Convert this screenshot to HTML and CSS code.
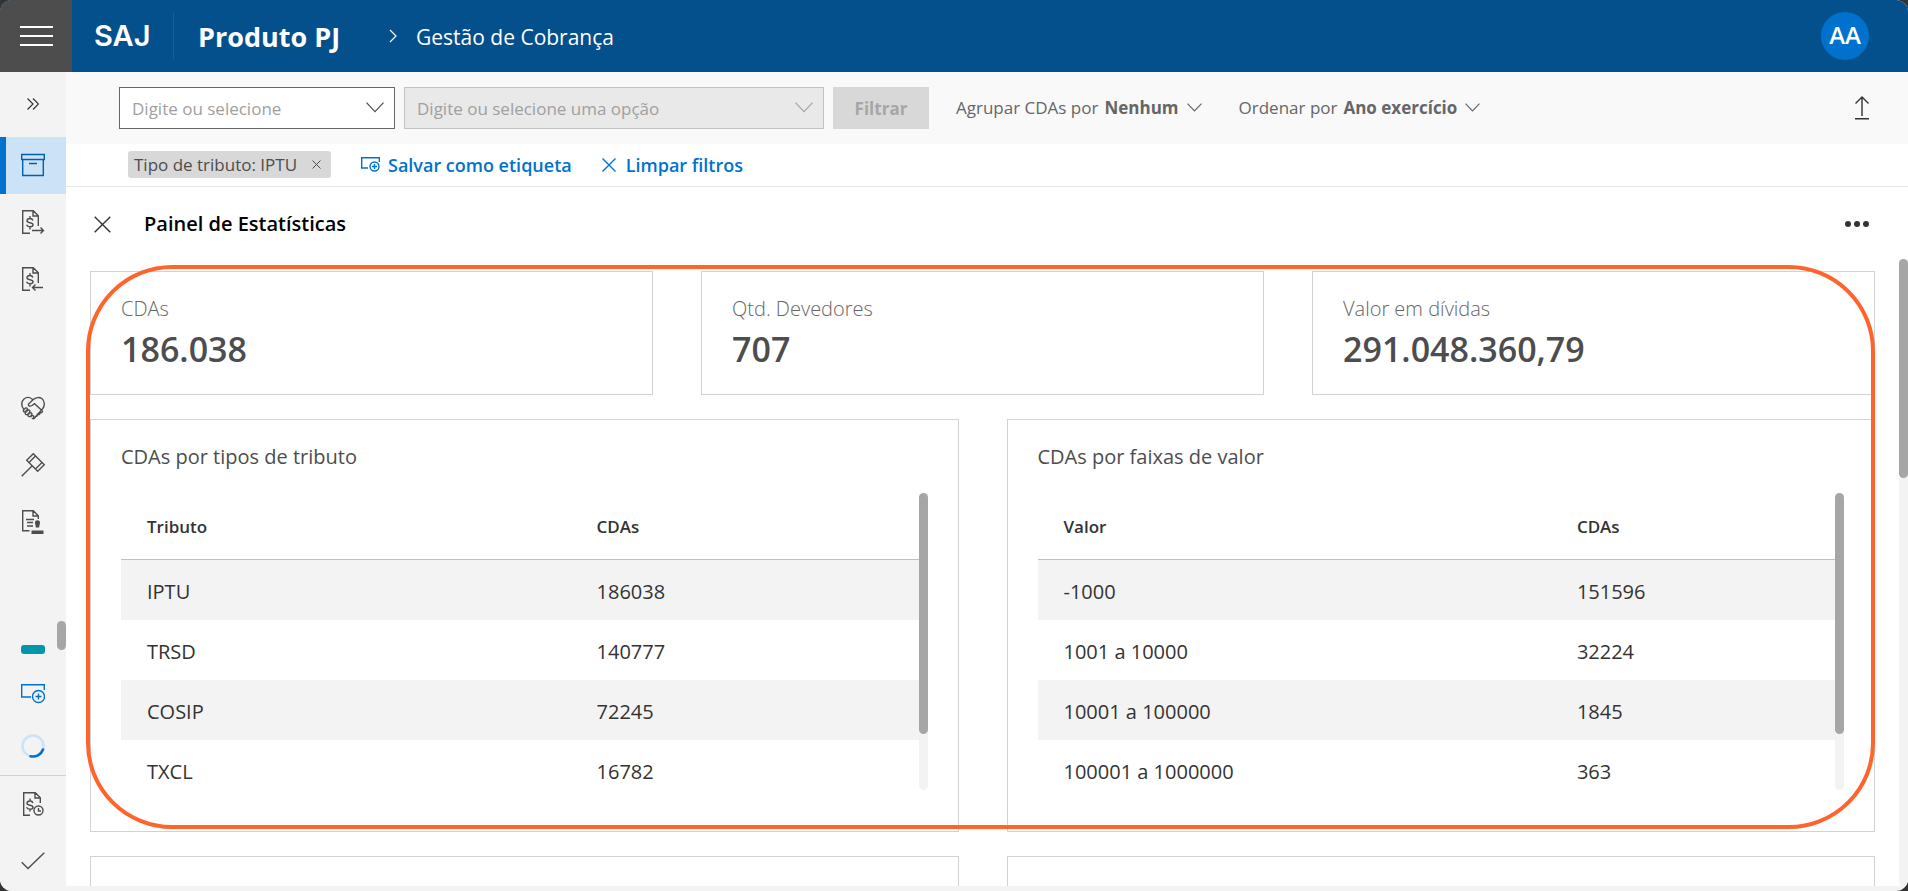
FILE: index.html
```html
<!DOCTYPE html>
<html lang="pt-BR">
<head>
    <meta charset="UTF-8">
    <meta name="viewport" content="width=device-width, initial-scale=1.0">
    <title>SAJ - Gestão de Cobrança</title>
    <link rel="stylesheet" href="styles.css">
</head>
<body>
    <div class="app">
        <header class="topbar">
            <button class="menu-button" aria-label="Menu"><span></span><span></span><span></span></button>
            <span class="logo">SAJ</span>
            <span class="product">Produto PJ</span>
            <svg class="crumb-arrow" width="8" height="14" viewBox="0 0 8 14"><path d="M1 1l6 6-6 6"/></svg>
            <span class="crumb">Gestão de Cobrança</span>
            <button class="avatar">AA</button>
        </header>

        <div class="body">
            <nav class="sidebar">
                <button class="side-item expand" aria-label="Expandir">
                    <svg width="12" height="12" viewBox="0 0 12 12"><path d="M0.5 0.5L6 6L0.5 11.5M6 0.5L11.5 6L6 11.5"/></svg>
                </button>
                <button class="side-item active" aria-label="Arquivo">
                    <svg width="24" height="24" viewBox="0 0 24 24"><path d="M0.7 1.5h22.6v5H0.7zM1.7 6.5v16h20.6v-16M8 10.5h8"/></svg>
                </button>
                <button class="side-item" aria-label="Envio">
                    <svg width="24" height="24" viewBox="0 0 24 24"><path d="M9 23.3H1.7V0.7h10.6l5 5V16M12 1v5h5M9 6v2.5M9 16.5v3M12 10.5c-.5-1.500-1.500-2-3-2-1.800 0-3 .8-3 2.200 0 3 6 1 6 4 0 1.300-1.200 2-3 2s-3-.8-3.500-2M11 20.500h11.500M19.500 17.500l3 3-3 3"/></svg>
                </button>
                <button class="side-item" aria-label="Recebimento">
                    <svg width="24" height="24" viewBox="0 0 24 24"><path d="M9 23.3H1.7V0.7h10.6l5 5V16M12 1v5h5M9 6v2.5M9 16.5v3M12 10.5c-.5-1.500-1.500-2-3-2-1.800 0-3 .8-3 2.200 0 3 6 1 6 4 0 1.300-1.200 2-3 2s-3-.8-3.500-2M22 20.500H11.500M14.500 17.500l-3 3 3 3"/></svg>
                </button>
                <button class="side-item group-start" aria-label="Acordos">
                    <svg width="24" height="24" viewBox="0 0 24 24"><path d="M3 13.500C0 10 0 5.500 3 3c2.500-2 5.500-2 8 0l1 .8c2.500-2.500 6.500-3 9-1 2.800 2.300 3 6.500.8 9.700L14 21.500c-1 1.500-2.500 1.500-3 .5M12 3.800L7.500 8c-.5 2 1.500 2.800 3.500 1.500l2.500-1.800 8 7.300M3 13.500l1.500-1.500c1.500-.5 2.500.8 1.500 2l-2 2c-1.500 0-2.200-1.300-1-2.500M4.500 16.500l2.500-2.500c1.500-.3 2.500 1 1.500 2.500L6.500 18.500c-1.500.5-2.800-.8-2-2M7 18.700l2-2c1.500-.3 2.500 1 1.500 2.500L9.300 20.500c-1.300.5-2.800-.5-2.300-1.800M9.500 21l1.500-1.500c1.500-.2 2.300 1 1.500 2.200l-1 1M21.500 15c0 1.500-1 2-2.500 1.500 0 1.800-1 2.500-2.500 1.800 0 1.700-1 2.500-2.500 2"/></svg>
                </button>
                <button class="side-item" aria-label="Processos">
                    <svg width="24" height="24" viewBox="0 0 24 24"><path d="M0.700 23.300L11 13M12.300 0.700l-6.600 6.600L16.700 18.300L23.300 11.700zM14.500 3L8 9.500M21 9.500L14.500 16"/></svg>
                </button>
                <button class="side-item" aria-label="Certidões">
                    <svg width="24" height="24" viewBox="0 0 24 24"><path d="M8.500 20.700H1.700V0.700h10.600l5 5V9M12 1v5h5M5 9.500h8M6 12.500h6M6 16h6"/><path class="solid" d="M10.500 20.500h12v3.500h-12zM14 12.500c0-3 5-3 5 0 0 1.500-.8 3-.8 5h-3.400c0-2-.8-3.500-.8-5z"/></svg>
                </button>

                <div class="side-bottom">
                    <div class="side-item tag"><span></span></div>
                    <button class="side-item blue" aria-label="Nova etiqueta">
                        <svg width="24" height="20" viewBox="0 0 24 20"><path d="M10 13H0.700V0.700h22.600V6"/><circle cx="17.500" cy="12.500" r="6"/><path d="M17.500 9.500v6M14.500 12.500h6"/></svg>
                    </button>
                    <div class="side-item blue">
                        <svg width="24" height="24" viewBox="0 0 24 24"><circle class="ring" cx="12" cy="12" r="10.500"/><path class="arc" d="M9.500 22.200A10.500 10.500 0 0 0 22 15.500"/></svg>
                    </div>
                    <div class="side-footer">
                        <button class="side-item" aria-label="Histórico">
                            <svg width="24" height="24" viewBox="0 0 24 24"><path d="M9 23.300H2.700V0.700h11.600l5 5V11M14 1v5h5M9 6.500V9M9 17v2.500M12 11c-.5-1.500-1.500-2-3-2-1.800 0-3 .8-3 2.200 0 3 6 1 6 4 0 1.300-1.200 2-3 2s-3-.8-3.500-2"/><circle cx="17.500" cy="18.500" r="4.500"/><path d="M17.500 16v3H20"/></svg>
                        </button>
                        <button class="side-item" aria-label="Concluir">
                            <svg width="24" height="18" viewBox="0 0 24 18"><path d="M0.700 10.300L7 16.500L23.300 0.700"/></svg>
                        </button>
                    </div>
                </div>
                <span class="side-thumb"></span>
            </nav>

            <main class="content">
                <div class="filters">
                    <div class="combo combo-field">
                        <select aria-label="Campo">
                            <option>Digite ou selecione</option>
                        </select>
                        <svg width="18" height="11" viewBox="0 0 18 11"><path d="M0.500 0.700L9 9.700L17.500 0.700"/></svg>
                    </div>
                    <div class="combo combo-option">
                        <select aria-label="Opção" disabled>
                            <option>Digite ou selecione uma opção</option>
                        </select>
                        <svg width="18" height="11" viewBox="0 0 18 11"><path d="M0.500 0.700L9 9.700L17.500 0.700"/></svg>
                    </div>
                    <button class="filter-button" disabled>Filtrar</button>
                    <button class="sort-button group-by">Agrupar CDAs por <b>Nenhum</b>
                        <svg width="15" height="9" viewBox="0 0 15 9"><path d="M0.500 0.700L7.500 8L14.500 0.700"/></svg>
                    </button>
                    <button class="sort-button">Ordenar por <b>Ano exercício</b>
                        <svg width="15" height="9" viewBox="0 0 15 9"><path d="M0.500 0.700L7.500 8L14.500 0.700"/></svg>
                    </button>
                    <button class="export-button" aria-label="Exportar">
                        <svg width="14" height="24" viewBox="0 0 14 24"><path d="M7 1v19M0.500 7.500L7 1l6.500 6.500M0 22.800h14"/></svg>
                    </button>
                </div>

                <div class="chips">
                    <span class="chip">Tipo de tributo: IPTU
                        <button aria-label="Remover filtro"><svg width="9" height="9" viewBox="0 0 9 9"><path d="M0.500 0.500l8 8M8.500 0.500l-8 8"/></svg></button>
                    </span>
                    <a href="#" class="save-link">
                        <svg width="19" height="15" viewBox="0 0 19 15"><path d="M7 11H0.700V0.700h17.600V5"/><circle cx="13.500" cy="9.500" r="4.500"/><path d="M13.500 7v5M11 9.500h5"/></svg>
                        Salvar como etiqueta
                    </a>
                    <a href="#">
                        <svg width="14" height="14" viewBox="0 0 14 14"><path d="M0.500 0.500l13 13M13.500 0.500l-13 13"/></svg>
                        Limpar filtros
                    </a>
                </div>

                <div class="panel-header">
                    <button aria-label="Fechar"><svg width="17" height="17" viewBox="0 0 17 17"><path d="M0.700 0.700l15.600 15.600M16.300 0.700L0.700 16.300"/></svg></button>
                    <h1>Painel de Estatísticas</h1>
                    <button class="more" aria-label="Mais opções"><svg width="24" height="6" viewBox="0 0 24 6"><circle cx="3" cy="3" r="3"/><circle cx="12" cy="3" r="3"/><circle cx="21" cy="3" r="3"/></svg></button>
                </div>

                <div class="stats">
                    <div class="stats-scroll">
                        <div class="highlight">
                            <div class="totals">
                                <section class="card total"><h2>CDAs</h2><p>186.038</p></section>
                                <section class="card total"><h2>Qtd. Devedores</h2><p>707</p></section>
                                <section class="card total"><h2>Valor em dívidas</h2><p>291.048.360,79</p></section>
                            </div>
                            <div class="charts">
                                <section class="card chart">
                                    <h2>CDAs por tipos de tributo</h2>
                                    <div class="table-box">
                                        <table class="by-type">
                                            <thead>
                                                <tr><th>Tributo</th><th>CDAs</th></tr>
                                            </thead>
                                            <tbody>
                                                <tr><td>IPTU</td><td>186038</td></tr>
                                                <tr><td>TRSD</td><td>140777</td></tr>
                                                <tr><td>COSIP</td><td>72245</td></tr>
                                                <tr><td>TXCL</td><td>16782</td></tr>
                                            </tbody>
                                        </table>
                                        <div class="track"><div class="thumb"></div></div>
                                    </div>
                                </section>
                                <section class="card chart">
                                    <h2>CDAs por faixas de valor</h2>
                                    <div class="table-box">
                                        <table class="by-value">
                                            <thead>
                                                <tr><th>Valor</th><th>CDAs</th></tr>
                                            </thead>
                                            <tbody>
                                                <tr><td>-1000</td><td>151596</td></tr>
                                                <tr><td>1001 a 10000</td><td>32224</td></tr>
                                                <tr><td>10001 a 100000</td><td>1845</td></tr>
                                                <tr><td>100001 a 1000000</td><td>363</td></tr>
                                            </tbody>
                                        </table>
                                        <div class="track"><div class="thumb"></div></div>
                                    </div>
                                </section>
                            </div>
                        </div>
                        <div class="charts">
                            <section class="card chart"><h2>CDAs por saldo devedor</h2></section>
                            <section class="card chart"><h2>CDAs por validade do título</h2></section>
                        </div>
                    </div>
                    <div class="track"><div class="thumb"></div></div>
                </div>
            </main>
        </div>
    </div>
</body>
</html>
```

FILE: styles.css
```css
* {
    box-sizing: border-box;
}

body {
    margin: 0;
    background: #333;
    font-family: "Open Sans", "Noto Sans", sans-serif;
    font-size: 18px;
    color: #333;
}

button, select {
    font: inherit;
    color: inherit;
}

button {
    padding: 0;
    border: none;
    background: none;
    cursor: pointer;
}

h1, h2, p {
    margin: 0;
}

svg {
    display: block;
    flex: none;
    fill: none;
    stroke: currentColor;
    stroke-width: 1.4;
}

.app {
    display: flex;
    flex-direction: column;
    height: 100vh;
    border-radius: 12px;
    overflow: hidden;
    background: #f3f3f3;
}

/* Top bar */
.topbar {
    display: flex;
    align-items: center;
    flex: none;
    height: 72px;
    padding-right: 39px;
    background: #04508c;
    color: #fff;
}

.menu-button {
    display: flex;
    flex-direction: column;
    align-items: center;
    justify-content: center;
    gap: 7px;
    width: 72px;
    height: 72px;
    background: #4d4d4d;
}

.menu-button span {
    width: 33px;
    height: 2px;
    background: #fff;
}

.logo {
    width: 102px;
    height: 46px;
    padding-left: 22px;
    border-right: 1px solid #0b62a8;
    font-family: Inter, sans-serif;
    font-size: 29px;
    font-weight: 600;
    line-height: 46px;
}

.product {
    width: 191px;
    margin-left: 24px;
    font-size: 27px;
    font-weight: 700;
}

.crumb-arrow {
    stroke-width: 1.2;
}

.crumb {
    margin-left: 19px;
    padding-top: 2px;
    font-size: 21px;
}

.avatar {
    width: 48px;
    height: 48px;
    margin-left: auto;
    padding-bottom: 3px;
    border-radius: 50%;
    background: #0072ce;
    font-size: 24px;
    font-weight: 600;
}

.body {
    display: flex;
    flex: 1;
    min-height: 0;
}

/* Sidebar */
.sidebar {
    position: relative;
    display: flex;
    flex-direction: column;
    flex: none;
    width: 66px;
    background: #f3f3f3;
    color: #4d4d4d;
}

.side-item {
    display: flex;
    align-items: center;
    justify-content: center;
    flex: none;
    width: 100%;
    height: 57px;
    padding-bottom: 2px;
}

.expand {
    height: 65px;
    color: #333;
}

.expand svg {
    stroke-width: 1.2;
}

.active {
    background: #cce3f7;
    border-left: 6px solid #0072ce;
    padding-right: 6px;
    color: #0060b0;
}

.group-start {
    margin-top: 72px;
}

.solid {
    fill: currentColor;
    stroke: none;
}

.side-bottom {
    margin-top: auto;
}

.tag {
    height: 36px;
}

.tag span {
    width: 24px;
    height: 9px;
    border-radius: 3px;
    background: #0097a9;
}

.blue {
    height: 52px;
    padding-bottom: 0;
    color: #0072ce;
}

.ring {
    stroke: #cce3f7;
    stroke-width: 2.6;
}

.arc {
    stroke-width: 2.6;
    stroke-linecap: round;
}

.side-footer {
    margin-top: 3px;
    padding-bottom: 1px;
    border-top: 1px solid #d2d2d2;
}

.side-thumb {
    position: absolute;
    right: 0;
    bottom: 241px;
    width: 9px;
    height: 29px;
    border-radius: 5px;
    background: #a6a6a6;
}

/* Filters */
.content {
    display: flex;
    flex-direction: column;
    flex: 1;
    min-width: 0;
    margin-bottom: 5px;
    background: #fff;
}

.filters {
    display: flex;
    align-items: center;
    flex: none;
    height: 72px;
    padding: 0 39px 0 53px;
    background: #f9f9f9;
    color: #666;
}

.combo {
    position: relative;
    margin-right: 9px;
}

.combo-field {
    width: 276px;
}

.combo-option {
    width: 420px;
}

.combo select {
    display: block;
    width: 100%;
    height: 42px;
    padding: 0 12px;
    border: 1px solid #666;
    border-radius: 0;
    background: #fff;
    color: #a0a0a0;
    font-size: 17px;
    appearance: none;
}

.combo select:disabled {
    border-color: #c3c3c3;
    background: #e9e9e9;
    opacity: 1;
}

.combo svg {
    position: absolute;
    top: 15px;
    right: 11px;
    color: #4d4d4d;
    stroke-width: 1.2;
    pointer-events: none;
}

.combo-option svg {
    color: #a6a6a6;
}

.filter-button {
    width: 96px;
    height: 42px;
    background: #d8d8d8;
    color: #a6a6a6;
    font-size: 17px;
    font-weight: 700;
}

.sort-button {
    display: flex;
    align-items: center;
    gap: 6px;
    padding-bottom: 2px;
    font-size: 17px;
    white-space: nowrap;
}

.sort-button b {
    margin-right: 2px;
}

.sort-button svg {
    stroke-width: 1.2;
}

.group-by {
    margin: 0 37px 0 27px;
}

.export-button {
    margin-left: auto;
    color: #333;
}

.chips {
    display: flex;
    align-items: center;
    flex: none;
    height: 43px;
    padding: 0 0 1px 62px;
    border-bottom: 1px solid #e6e6e6;
}

.chip {
    display: flex;
    align-items: center;
    justify-content: space-between;
    width: 203px;
    height: 27px;
    padding: 0 10px 0 6px;
    border-radius: 3px;
    background: #d8d8d8;
    color: #4d4d4d;
    font-size: 17px;
    white-space: nowrap;
}

.chip svg {
    stroke-width: 1;
}

.chips a {
    display: flex;
    align-items: center;
    gap: 10px;
    color: #0072ce;
    font-size: 18px;
    font-weight: 600;
    text-decoration: none;
}

.chips .save-link {
    gap: 8px;
    margin: 0 30px;
}

/* Statistics */
.panel-header {
    display: flex;
    align-items: center;
    flex: none;
    height: 72px;
    padding: 2px 39px 0 28px;
}

.panel-header h1 {
    margin-left: 33px;
    padding-bottom: 2px;
    color: #000;
    font-size: 20px;
    font-weight: 600;
}

.more {
    margin-left: auto;
}

.more svg {
    fill: currentColor;
    stroke: none;
}

.stats {
    display: flex;
    flex: 1;
    min-height: 0;
}

.stats-scroll {
    flex: 1;
    min-width: 0;
    padding: 12px 24px 0;
    overflow: hidden;
}

.track {
    flex: none;
    width: 9px;
    border-radius: 5px;
    background: #f3f3f3;
}

.thumb {
    height: 35%;
    border-radius: 5px;
    background: #a6a6a6;
}

.highlight {
    position: relative;
    margin-bottom: 24px;
}

.highlight::after {
    content: "";
    position: absolute;
    inset: -6px 0 3px -4px;
    border: 4px solid #ff642d;
    border-radius: 86px;
    pointer-events: none;
}

.totals {
    display: grid;
    grid-template-columns: repeat(3, 1fr);
    gap: 48px;
    margin-bottom: 24px;
}

.charts {
    display: grid;
    grid-template-columns: repeat(2, 1fr);
    gap: 48px;
}

.card {
    border: 1px solid #d2d2d2;
}

.total {
    height: 124px;
    padding: 23px 30px;
}

.total h2 {
    color: #666;
    font-size: 20px;
    font-weight: 300;
    line-height: 27px;
}

.total p {
    color: #4d4d4d;
    font-size: 34px;
    font-weight: 600;
    line-height: 54px;
}

.chart {
    padding: 23px 30px 41px;
}

.chart h2 {
    color: #4d4d4d;
    font-size: 20px;
    font-weight: 400;
    line-height: 28px;
}

.table-box {
    display: flex;
    height: 297px;
    margin-top: 22px;
}

.table-box .thumb {
    height: 81%;
}

table {
    flex: 1;
    width: 100%;
    height: 307px;
    border-spacing: 0;
    table-layout: fixed;
}

th, td {
    padding: 0 26px;
    text-align: left;
}

th {
    height: 67px;
    border-bottom: 1px solid #bfbfbf;
    font-size: 17px;
    font-weight: 600;
}

td {
    height: 60px;
    padding-top: 2px;
    font-size: 20px;
}

th:last-child, td:last-child {
    padding-left: 21px;
}

tbody tr:nth-child(odd) {
    background: #f3f3f3;
}

.by-type th:first-child {
    width: 57%;
}

.by-value th:first-child {
    width: 65%;
}
```
